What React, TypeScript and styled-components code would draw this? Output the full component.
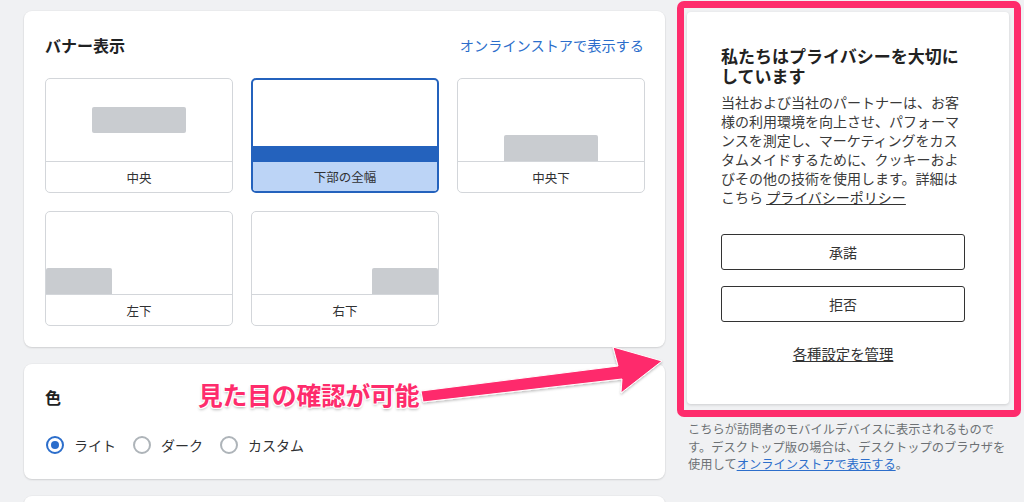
import * as React from 'react';
import styled, { createGlobalStyle, css } from 'styled-components';

const GlobalStyle = createGlobalStyle`
    html, body {
        margin: 0;
        padding: 0;
        background: #f0f1f3;
        overflow: hidden;
    }
    body {
        font-family: 'Noto Sans CJK JP', 'Noto Sans', sans-serif;
        color: #202223;
    }
`;

const Page = styled.div`
    position: relative;
    width: 1024px;
    height: 502px;
    overflow: hidden;
    display: flex;
    align-items: flex-start;
    gap: 12px;
    padding-top: 1px;
    box-sizing: border-box;
`;

const LeftColumn = styled.div`
    width: 641px;
    margin: 10px 0 0 24px;
    display: flex;
    flex-direction: column;
    gap: 17px;
`;

const Card = styled.section<{ $tall?: boolean }>`
    background: #fff;
    border-radius: 8px;
    box-shadow: 0 1px 2px rgba(0, 0, 0, 0.12), 0 0 0 1px rgba(0, 0, 0, 0.02);
    padding: 21px 20px 21px 21px;
    ${p => p.$tall && css`min-height: 120px;`}
`;

const CardHeader = styled.div`
    height: 26px;
    display: flex;
    align-items: center;
    justify-content: space-between;
    margin-bottom: 20px;
`;

const CardTitle = styled.h2`
    margin: 0;
    font-size: 16px;
    line-height: 24px;
    font-weight: 700;
    color: #202223;
`;

const HeaderLink = styled.a`
    font-size: 14.2px;
    color: #2c6ecb;
    text-decoration: none;
    margin-right: 1px;
`;

const TileGrid = styled.div`
    display: grid;
    grid-template-columns: repeat(3, 188px);
    gap: 18px;
`;

const Tile = styled.div<{ $selected?: boolean }>`
    height: 115px;
    box-sizing: border-box;
    border: 1px solid #d3d6da;
    border-radius: 5px;
    overflow: hidden;
    display: flex;
    flex-direction: column;
    background: #fff;
    ${p => p.$selected && css`
        border: 2px solid #2462bd;
    `}
`;

const Preview = styled.div<{ $justify: string; $align: string }>`
    flex: 1;
    display: flex;
    justify-content: ${p => p.$justify};
    align-items: ${p => p.$align};
`;

const Block = styled.div<{ $width: number; $round?: boolean }>`
    width: ${p => p.$width}px;
    height: 26px;
    background: #c9ccd0;
    border-radius: ${p => (p.$round ? '2px' : '2px 2px 0 0')};
`;

const Band = styled.div`
    width: 100%;
    height: 16px;
    background: #2462bd;
`;

const TileLabel = styled.div<{ $selected?: boolean }>`
    height: 30px;
    border-top: 1px solid #d3d6da;
    display: flex;
    align-items: center;
    justify-content: center;
    font-size: 12.5px;
    color: #303133;
    ${p => p.$selected && css`
        height: 29px;
        border-top: none;
        background: #bcd4f6;
    `}
`;

const ColorTitle = styled(CardTitle)`
    margin-bottom: 23px;
`;

const RadioRow = styled.div`
    height: 26px;
    display: flex;
    align-items: center;
    gap: 17px;
    padding-left: 1px;
`;

const RadioItem = styled.label`
    display: flex;
    align-items: center;
    gap: 10px;
    font-size: 14px;
    color: #303133;
`;

const RadioCircle = styled.span<{ $checked?: boolean }>`
    width: 18px;
    height: 18px;
    box-sizing: border-box;
    border-radius: 50%;
    border: 2px solid ${p => (p.$checked ? '#2c6ecb' : '#aeb4b9')};
    display: grid;
    place-items: center;
    &::after {
        content: '';
        width: 8px;
        height: 8px;
        border-radius: 50%;
        background: #2c6ecb;
        display: ${p => (p.$checked ? 'block' : 'none')};
    }
`;

const RightColumn = styled.div`
    width: 344px;
`;

const HighlightFrame = styled.div`
    border: 7px solid #fe2c6c;
    border-radius: 7px;
    padding: 4px 5px 6px 3px;
`;

const ConsentPanel = styled.div`
    background: #fff;
    border-radius: 4px;
    box-shadow: 0 1px 3px rgba(0, 0, 0, 0.15);
    padding: 34px 44px 40px 34px;
    display: flex;
    flex-direction: column;
`;

const ConsentTitle = styled.h3`
    margin: 0 0 7px;
    font-size: 17px;
    line-height: 20px;
    font-weight: 700;
    color: #222;
`;

const ConsentText = styled.p`
    margin: 0 0 27px;
    font-size: 14px;
    line-height: 19px;
    color: #3a3a3a;
    > a {
        color: #333;
        text-decoration: underline;
    }
`;

const ConsentButton = styled.button`
    height: 36px;
    margin-bottom: 16px;
    border: 1px solid #333;
    border-radius: 3px;
    background: #fff;
    font-family: inherit;
    font-size: 14px;
    color: #333;
`;

const ManageLink = styled.a`
    margin-top: 6px;
    align-self: center;
    font-size: 14.4px;
    line-height: 20px;
    color: #333;
    text-decoration: underline;
`;

const Caption = styled.p`
    margin: 4px 0 0 11px;
    width: 321px;
    font-size: 12.25px;
    line-height: 17.5px;
    color: #6d7175;
    > a {
        color: #2c6ecb;
        text-decoration: underline;
    }
`;

const Annotation = styled.div`
    position: absolute;
    left: 198px;
    top: 378px;
    font-size: 24.8px;
    line-height: 32px;
    font-weight: 700;
    color: #fe2c6c;
    letter-spacing: -0.2px;
    text-shadow:
        -1px -1px 0 #fff, 1px -1px 0 #fff, -1px 1px 0 #fff, 1px 1px 0 #fff,
        0 2px 3px rgba(0, 0, 0, 0.3);
`;

const ArrowSvg = styled.svg`
    position: absolute;
    left: 0;
    top: 0;
    pointer-events: none;
`;

const tiles = [
    { label: '中央', justify: 'center', align: 'center', width: 94, round: true },
    { label: '下部の全幅', justify: 'stretch', align: 'flex-end', selected: true },
    { label: '中央下', justify: 'center', align: 'flex-end', width: 94 },
    { label: '左下', justify: 'flex-start', align: 'flex-end', width: 66 },
    { label: '右下', justify: 'flex-end', align: 'flex-end', width: 66 },
];

export default function App() {
    return (
        <Page>
            <GlobalStyle />
            <LeftColumn>
                <Card>
                    <CardHeader>
                        <CardTitle>バナー表示</CardTitle>
                        <HeaderLink href="#">オンラインストアで表示する</HeaderLink>
                    </CardHeader>
                    <TileGrid>
                        {tiles.map(t => (
                            <Tile key={t.label} $selected={t.selected}>
                                <Preview $justify={t.justify} $align={t.align}>
                                    {t.selected ? <Band /> : <Block $width={t.width!} $round={t.round} />}
                                </Preview>
                                <TileLabel $selected={t.selected}>{t.label}</TileLabel>
                            </Tile>
                        ))}
                    </TileGrid>
                </Card>
                <Card>
                    <ColorTitle>色</ColorTitle>
                    <RadioRow>
                        <RadioItem><RadioCircle $checked />ライト</RadioItem>
                        <RadioItem><RadioCircle />ダーク</RadioItem>
                        <RadioItem><RadioCircle />カスタム</RadioItem>
                    </RadioRow>
                </Card>
                <Card $tall />
            </LeftColumn>
            <RightColumn>
                <HighlightFrame>
                    <ConsentPanel>
                        <ConsentTitle>私たちはプライバシーを大切にしています</ConsentTitle>
                        <ConsentText>
                            当社および当社のパートナーは、お客様の利用環境を向上させ、パフォーマンスを測定し、マーケティングをカスタムメイドするために、クッキーおよびその他の技術を使用します。詳細はこちら <a href="#">プライバシーポリシー</a>
                        </ConsentText>
                        <ConsentButton>承諾</ConsentButton>
                        <ConsentButton>拒否</ConsentButton>
                        <ManageLink href="#">各種設定を管理</ManageLink>
                    </ConsentPanel>
                </HighlightFrame>
                <Caption>
                    こちらが訪問者のモバイルデバイスに表示されるものです。デスクトップ版の場合は、デスクトップのブラウザを使用して<a href="#">オンラインストアで表示する</a>。
                </Caption>
            </RightColumn>
            <Annotation>見た目の確認が可能</Annotation>
            <ArrowSvg width="1024" height="502" viewBox="0 0 1024 502">
                <defs>
                    <filter id="arrowShadow" x="-10%" y="-30%" width="120%" height="160%">
                        <feDropShadow dx="0" dy="1.5" stdDeviation="1.2" floodColor="#000" floodOpacity="0.25" />
                    </filter>
                </defs>
                <polygon
                    points="421,391 618,366 613,347 662,361 621,393 622,379 423,402"
                    fill="#fe2c6c"
                    stroke="#fff"
                    strokeWidth="1"
                    strokeLinejoin="round"
                    filter="url(#arrowShadow)"
                />
            </ArrowSvg>
        </Page>
    );
}
